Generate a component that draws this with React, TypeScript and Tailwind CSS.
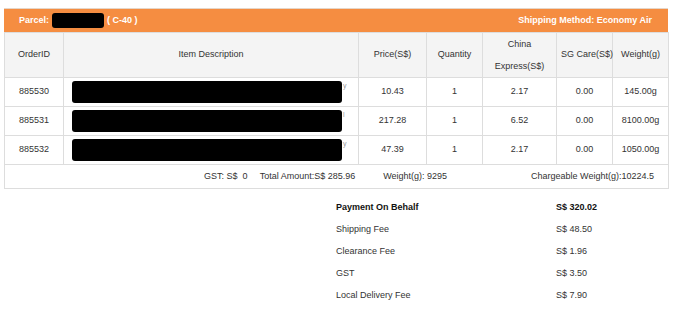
import React from 'react';

type OrderRow = {
    id: string;
    price: string;
    qty: number;
    express: string;
    care: string;
    weight: string;
    tail: string;
};

const rows: OrderRow[] = [
    { id: '885530', price: '10.43', qty: 1, express: '2.17', care: '0.00', weight: '145.00g', tail: 'y' },
    { id: '885531', price: '217.28', qty: 1, express: '6.52', care: '0.00', weight: '8100.00g', tail: 'l' },
    { id: '885532', price: '47.39', qty: 1, express: '2.17', care: '0.00', weight: '1050.00g', tail: 'y' },
];

const fees = [
    { label: 'Payment On Behalf', value: 'S$ 320.02', bold: true },
    { label: 'Shipping Fee', value: 'S$ 48.50' },
    { label: 'Clearance Fee', value: 'S$ 1.96' },
    { label: 'GST', value: 'S$ 3.50' },
    { label: 'Local Delivery Fee', value: 'S$ 7.90' },
];

const th = 'border border-[#dddddd] font-normal text-center align-middle px-1 whitespace-nowrap';
const td = 'border border-[#dddddd] text-center align-middle';

export default function App() {
    return (
        <div
            className="w-[673px] h-[320px] bg-white text-[#333] text-[9px] overflow-hidden"
            style={{ fontFamily: '"Liberation Sans", Arial, sans-serif' }}
        >
            <div className="pt-2 pl-1">
                <div className="w-[664px] border-t border-[#e6d6c8]">
                    {/* parcel bar */}
                    <div className="h-[23px] bg-[#f58d41] text-white font-bold flex items-center justify-between pl-[15px] pr-[16px]">
                        <div className="flex items-center">
                            <span>Parcel:</span>
                            <span className="inline-block w-[52px] h-[15px] bg-black rounded-[3px] ml-[3px] mr-[3px]"></span>
                            <span>( C-40 )</span>
                        </div>
                        <span>Shipping Method: Economy Air</span>
                    </div>

                    <table className="w-[664px] table-fixed border-collapse">
                        <colgroup>
                            <col className="w-[59px]" />
                            <col className="w-[295px]" />
                            <col className="w-[68px]" />
                            <col className="w-[56px]" />
                            <col className="w-[74px]" />
                            <col className="w-[56px]" />
                            <col className="w-[56px]" />
                        </colgroup>
                        <thead>
                            <tr className="h-[45px] bg-[#f4f4f4]">
                                <th className={th}>OrderID</th>
                                <th className={th}>Item Description</th>
                                <th className={th}>Price(S$)</th>
                                <th className={th}>Quantity</th>
                                <th className={`${th} leading-[22px]`}>
                                    China
                                    <br />
                                    Express(S$)
                                </th>
                                <th className={`${th} px-0`}>SG Care(S$)</th>
                                <th className={th}>Weight(g)</th>
                            </tr>
                        </thead>
                        <tbody>
                            {rows.map(r => (
                                <tr key={r.id} className="h-[29px]">
                                    <td className={td}>{r.id}</td>
                                    <td className="border border-[#dddddd] align-middle pl-2">
                                        <div className="flex items-start">
                                            <div className="w-[270px] h-[22px] bg-black rounded-[3px]"></div>
                                            <span className="text-[#999] text-[7px] leading-none ml-[1px] mt-[1px]">{r.tail}</span>
                                        </div>
                                    </td>
                                    <td className={td}>{r.price}</td>
                                    <td className={td}>{r.qty}</td>
                                    <td className={td}>{r.express}</td>
                                    <td className={td}>{r.care}</td>
                                    <td className={td}>{r.weight}</td>
                                </tr>
                            ))}
                            <tr className="h-[24px]">
                                <td colSpan={7} className="border border-[#dddddd] align-middle">
                                    <div className="flex items-center justify-end pr-[14px] whitespace-nowrap">
                                        <span className="whitespace-pre">GST: S$  0</span>
                                        <span className="ml-[12px]">Total Amount:S$ 285.96</span>
                                        <span className="ml-[28px]">Weight(g): 9295</span>
                                        <span className="ml-[84px]">Chargeable Weight(g):10224.5</span>
                                    </div>
                                </td>
                            </tr>
                        </tbody>
                    </table>
                </div>
            </div>

            {/* fee summary */}
            <div className="mt-2 pl-[336px]">
                {fees.map(f => (
                    <div key={f.label} className={`flex items-center h-[22px] ${f.bold ? 'font-bold text-[#111]' : ''}`}>
                        <span className="w-[220px]">{f.label}</span>
                        <span>{f.value}</span>
                    </div>
                ))}
            </div>
        </div>
    );
}
